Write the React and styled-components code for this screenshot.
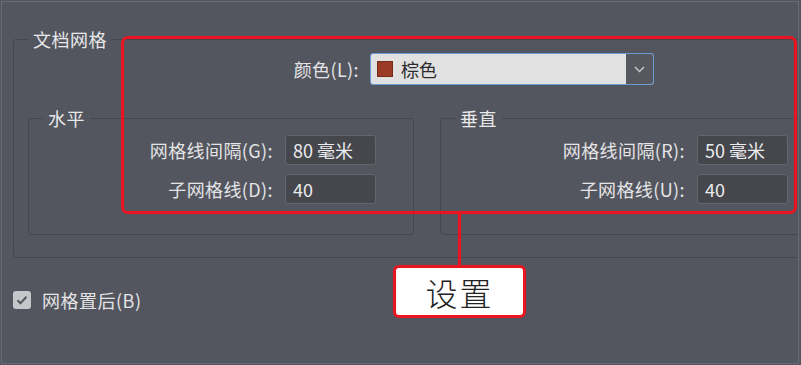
import styled, { createGlobalStyle } from 'styled-components';

const GlobalStyle = createGlobalStyle`
  html, body {
    margin: 0;
    background: #53565e;
  }
  body {
    font-family: "Noto Sans CJK SC", "Noto Sans", sans-serif;
    color: #e4e4e6;
  }
`;

const Window = styled.div`
  position: relative;
  box-sizing: border-box;
  width: 798px;
  height: 363px;
  margin: 1px 0 0 1px;
  padding: 25px 0 0 11px;
  border: 1px solid #676a71;
  background: #53565e;
  overflow: hidden;
`;

const Group = styled.fieldset`
  box-sizing: border-box;
  margin: 0;
  min-width: 0;
  border: 1px solid #45474d;
  border-radius: 3px;
  padding: ${(p) => p.$pad || '2px 14px 22px 14px'};
  width: ${(p) => p.$width || 'auto'};
  flex: none;
`;

const Legend = styled.legend`
  padding: 0 5px;
  font-size: 18px;
  letter-spacing: 0.5px;
  line-height: 24px;
  color: #e8e8ea;
`;

const SelectRow = styled.div`
  display: flex;
  align-items: center;
  gap: 11px;
  padding-left: 201px;
  height: 32px;
`;

const FieldLabel = styled.label`
  width: ${(p) => p.$width}px;
  text-align: right;
  font-size: 18px;
  letter-spacing: 0.4px;
  white-space: nowrap;
  flex: none;
`;

const Select = styled.div`
  box-sizing: border-box;
  display: flex;
  width: 284px;
  height: 32px;
  border: 1px solid #6b9bd6;
  border-radius: 3px;
  overflow: hidden;
  background: #e1e1e2;
`;

const SelectValue = styled.div`
  flex: 1;
  display: flex;
  align-items: center;
  gap: 8px;
  padding-left: 6px;
  color: #2c2c2e;
  font-size: 18px;
`;

const Swatch = styled.span`
  box-sizing: border-box;
  width: 16px;
  height: 16px;
  background: ${(p) => p.$color};
  border: 1px solid #7a2c1c;
`;

const SelectButton = styled.div`
  width: 27px;
  display: flex;
  align-items: center;
  justify-content: center;
  background: #55585f;
`;

const Columns = styled.div`
  display: flex;
  gap: 26px;
  margin-top: 21px;
`;

const Rows = styled.div`
  display: flex;
  flex-direction: column;
  gap: 9px;
`;

const Row = styled.div`
  display: flex;
  align-items: center;
  gap: 12px;
`;

const Input = styled.div`
  box-sizing: border-box;
  width: 91px;
  height: 30px;
  padding: 0 7px;
  display: flex;
  align-items: center;
  background: #45474d;
  border: 1px solid #63666d;
  border-radius: 3px;
  font-size: 18px;
  color: #ececee;
`;

const CheckRow = styled.div`
  display: flex;
  align-items: center;
  gap: 11px;
  margin-top: 29px;
  font-size: 18px;
  letter-spacing: 0.5px;
`;

const CheckBox = styled.span`
  width: 18px;
  height: 18px;
  border-radius: 3px;
  background: #c6c7ca;
  display: flex;
  align-items: center;
  justify-content: center;
`;

const Highlight = styled.div`
  position: absolute;
  left: 119px;
  top: 34px;
  width: 676px;
  height: 178px;
  box-sizing: border-box;
  border: 3px solid #ea1420;
  border-radius: 7px;
  pointer-events: none;
`;

const Connector = styled.div`
  position: absolute;
  left: 456px;
  top: 211px;
  width: 3px;
  height: 53px;
  background: #ea1420;
`;

const Callout = styled.div`
  position: absolute;
  left: 391px;
  top: 263px;
  width: 133px;
  height: 53px;
  box-sizing: border-box;
  border: 3px solid #ea1420;
  border-radius: 6px;
  background: #fff;
  color: #222;
  font-size: 32px;
  font-weight: 300;
  display: flex;
  align-items: center;
  justify-content: center;
  letter-spacing: 2px;
`;

function Field({ label, value }) {
  return (
    <Row>
      <FieldLabel $width={230}>{label}</FieldLabel>
      <Input>{value}</Input>
    </Row>
  );
}

const sections = [
  {
    title: '水平',
    rows: [
      { label: '网格线间隔(G):', value: '80 毫米' },
      { label: '子网格线(D):', value: '40' },
    ],
  },
  {
    title: '垂直',
    rows: [
      { label: '网格线间隔(R):', value: '50 毫米' },
      { label: '子网格线(U):', value: '40' },
    ],
  },
];

export default function App() {
  return (
    <>
      <GlobalStyle />
      <Window>
        <Group $width="840px">
          <Legend>文档网格</Legend>
          <SelectRow>
            <FieldLabel $width={130}>颜色(L):</FieldLabel>
            <Select>
              <SelectValue>
                <Swatch $color="#9b3a27" />
                棕色
              </SelectValue>
              <SelectButton>
                <svg width="11" height="7" viewBox="0 0 11 7">
                  <path d="M1 1l4.5 4.5L10 1" fill="none" stroke="#c4c5c8" strokeWidth="1.5" />
                </svg>
              </SelectButton>
            </Select>
          </SelectRow>
          <Columns>
            {sections.map((s) => (
              <Group key={s.title} $width="386px" $pad="5px 14px 30px 14px">
                <Legend>{s.title}</Legend>
                <Rows>
                  {s.rows.map((r) => (
                    <Field key={r.label} label={r.label} value={r.value} />
                  ))}
                </Rows>
              </Group>
            ))}
          </Columns>
        </Group>
        <CheckRow>
          <CheckBox>
            <svg width="12" height="10" viewBox="0 0 12 10">
              <path d="M1.5 5.2l3 3L10.5 1.8" fill="none" stroke="#56585e" strokeWidth="2" />
            </svg>
          </CheckBox>
          网格置后(B)
        </CheckRow>
        <Highlight />
        <Connector />
        <Callout>设置</Callout>
      </Window>
    </>
  );
}
